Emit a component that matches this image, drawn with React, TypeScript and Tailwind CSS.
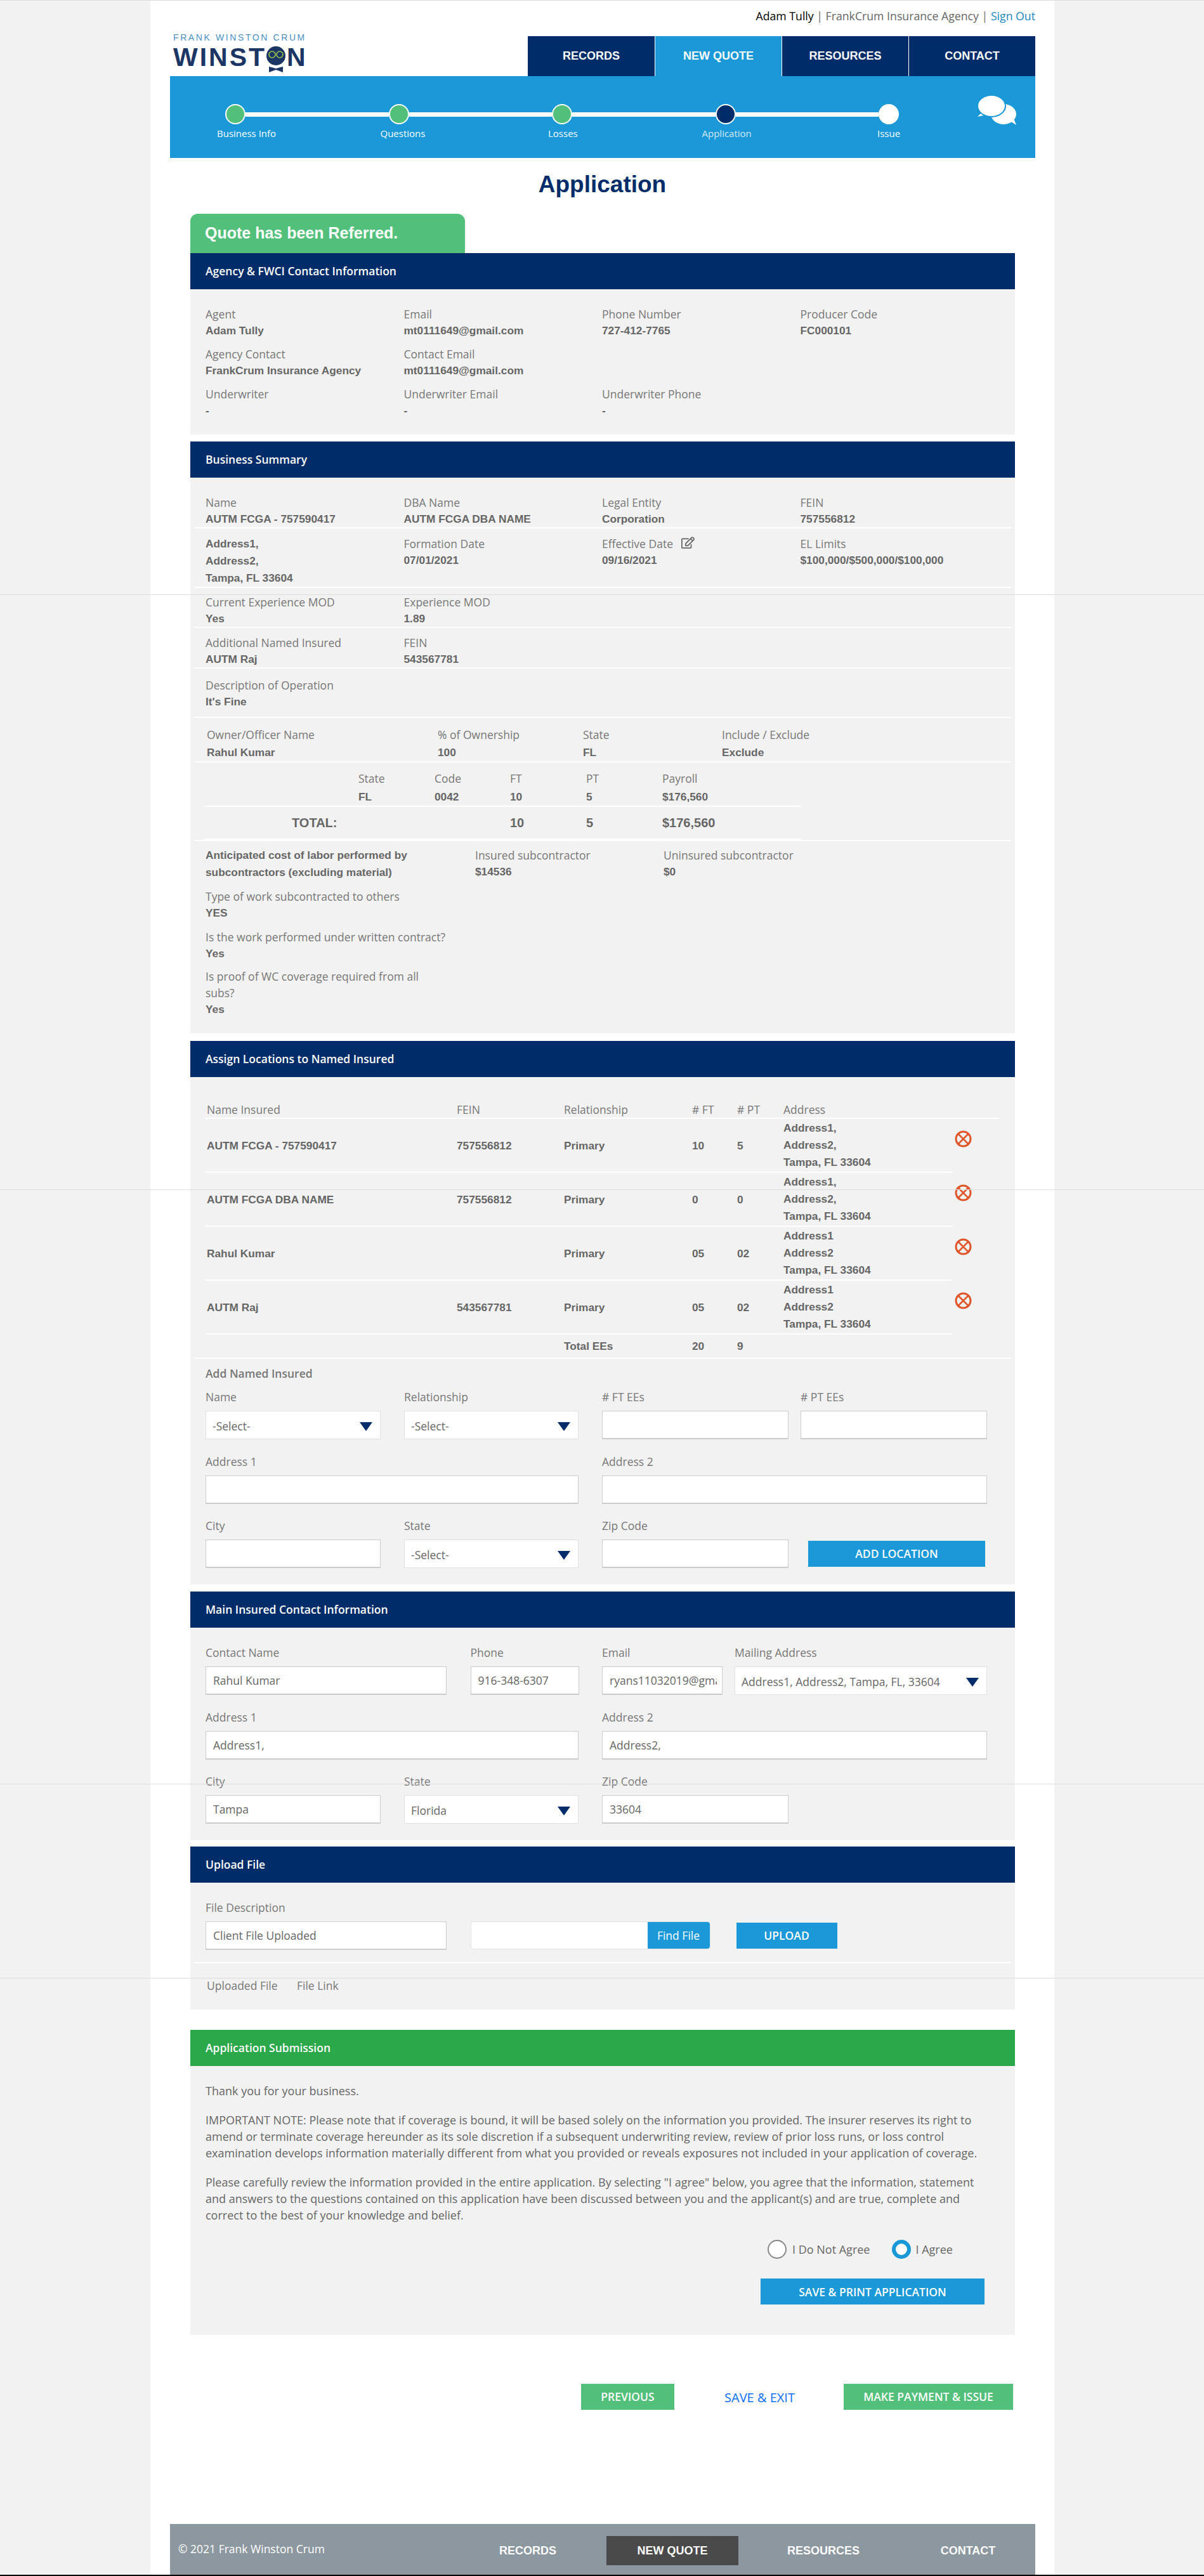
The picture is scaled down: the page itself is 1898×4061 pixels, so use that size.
import React from 'react';
import { FaRegEdit } from 'react-icons/fa';

const navItems = ['RECORDS', 'NEW QUOTE', 'RESOURCES', 'CONTACT'];

const sans = 'font-["Open_Sans",sans-serif]';
const arial = 'font-["Liberation_Sans",Arial,sans-serif]';

const Label = ({ children, className = '' }: { children?: React.ReactNode; className?: string }) => (
  <div className={`h-[26px] leading-[26px] text-[17.5px] text-[#777] whitespace-nowrap ${sans} ${className}`}>{children}</div>
);

const Value = ({ children, className = '' }: { children?: React.ReactNode; className?: string }) => (
  <div className={`h-[26px] leading-[26px] text-[17.3px] font-bold text-[#666] whitespace-nowrap ${arial} ${className}`}>{children}</div>
);

const Field = ({ label, value }: { label?: React.ReactNode; value?: React.ReactNode }) => (
  <div>
    <Label>{label}</Label>
    <Value>{value}</Value>
  </div>
);

const Section = ({ title, green, children }: { title: string; green?: boolean; children: React.ReactNode }) => (
  <section className="ml-[63px] w-[1300px]">
    <div className={`h-[57px] flex items-center pl-6 text-white text-[17.5px] font-semibold ${sans} ${green ? 'bg-[#2aa84a]' : 'bg-[#002d6a]'}`}>
      {title}
    </div>
    <div className="bg-[#f2f2f2]">{children}</div>
  </section>
);

// white divider between the summary rows
const Row = ({ children, className = '' }: { children: React.ReactNode; className?: string }) => (
  <div className={`mx-[6px] pl-[18px] border-b-2 border-white ${className}`}>{children}</div>
);

const Arrow = () => (
  <svg className="absolute right-[12px] top-[17px]" width="20" height="14" viewBox="0 0 20 14">
    <polygon points="0,0 20,0 10,14" fill="#002d6a" />
  </svg>
);

const Select = ({ value, className = '' }: { value: string; className?: string }) => (
  <div className={`relative h-[45px] bg-white border border-[#e2e2e2] pl-[10px] leading-[46px] text-[17.5px] text-[#666] whitespace-nowrap ${sans} ${className}`}>
    {value}
    <Arrow />
  </div>
);

const Input = ({ value = '', className = '' }: { value?: string; className?: string }) => (
  <input
    readOnly
    value={value}
    className={`block h-[45px] bg-white border border-[#ccc] border-b-2 pl-[11px] pr-[8px] text-[17.5px] text-[#666] ${sans} ${className}`}
  />
);

const BlueButton = ({ children, className = '' }: { children: React.ReactNode; className?: string }) => (
  <div className={`h-[41px] bg-[#1a98d8] flex items-center justify-center text-white text-[17.5px] font-semibold ${sans} ${className}`}>
    {children}
  </div>
);

const Step = ({ label, color, labelClass }: { label: string; color: string; labelClass: string }) => (
  <div className={`relative w-8 h-8 rounded-full border-2 border-white shrink-0 ${color}`}>
    <div className={`absolute top-[33px] h-[22px] leading-[22px] text-[15px] text-white whitespace-nowrap ${sans} ${labelClass}`}>{label}</div>
  </div>
);

const StepLine = () => <div className="h-[7px] flex-1 bg-white" />;

const Cancel = () => (
  <svg className="mt-[18px]" width="27" height="27" viewBox="0 0 27 27" fill="none" stroke="#e0562a" strokeWidth="3">
    <circle cx="13.5" cy="13.5" r="11.5" />
    <path d="M6 6 L21 21 M21 6 L6 21" strokeWidth="2.6" />
  </svg>
);

const tableCols = 'grid grid-cols-[394px_169px_202px_71px_73px_270px_27px]';

const locations = [
  { name: 'AUTM FCGA - 757590417', fein: '757556812', ft: '10', pt: '5', a1: 'Address1,', a2: 'Address2,' },
  { name: 'AUTM FCGA DBA NAME', fein: '757556812', ft: '0', pt: '0', a1: 'Address1,', a2: 'Address2,' },
  { name: 'Rahul Kumar', fein: '', ft: '05', pt: '02', a1: 'Address1', a2: 'Address2' },
  { name: 'AUTM Raj', fein: '543567781', ft: '05', pt: '02', a1: 'Address1', a2: 'Address2' },
];

const FormLabel = ({ children, className = '' }: { children: React.ReactNode; className?: string }) => (
  <Label className={`mb-[9px] font-medium ${className}`}>{children}</Label>
);

const App = () => {
  return (
    <div className="relative w-[1898px] h-[4061px] bg-[#f2f2f2] overflow-hidden border-t border-[#ddd]">
      <div className="ml-[237px] w-[1425px] h-full bg-white">
        {/* Top bar */}
        <div className="ml-[31px] w-[1364px]">
          <div className={`h-[56px] pt-[12px] text-right text-[17.7px] leading-[24px] text-[#666] ${sans}`}>
            <span className="text-black font-medium">Adam Tully</span> | FrankCrum Insurance Agency | <span className="text-[#1a88c4]">Sign Out</span>
          </div>

          <div className="flex justify-between h-[63px]">
            <div className={`-mt-[4px] ml-[5px] ${arial}`}>
              <div className="h-[13px] leading-[13px] text-[14px] tracking-[2.6px] text-[#4a90c4] whitespace-nowrap">FRANK WINSTON CRUM</div>
              <div className="flex items-start mt-[2px] text-[41px] leading-[44px] font-bold tracking-[3px] text-[#1b3565]">
                WINST
                <svg className="mt-[5px] -ml-[1px] mr-[1px]" width="32" height="41" viewBox="0 0 32 41">
                  <circle cx="16" cy="15" r="15" fill="#1b3565" />
                  <g fill="none" stroke="#9cc54a" strokeWidth="1.6">
                    <circle cx="10" cy="13" r="5" />
                    <circle cx="22" cy="13" r="5" />
                  </g>
                  <polygon points="5,32 16,35 27,32 27,41 16,37 5,41" fill="#1b3565" />
                </svg>
                N
              </div>
            </div>
            <div className="flex">
              {navItems.map((item, i) => (
                <div
                  key={item}
                  className={`w-[200px] flex items-center justify-center text-white text-[18px] font-bold ${arial} ${i > 0 ? 'border-l border-white' : ''} ${i === 1 ? 'bg-[#1a98d8]' : 'bg-[#002d6a]'}`}
                >
                  {item}
                </div>
              ))}
            </div>
          </div>

          {/* Progress band */}
          <div className="relative h-[129px] bg-[#1a98d8] pt-[44px] pl-[87px]">
            <div className="w-[1062px] flex items-center">
              <Step label="Business Info" color="bg-[#52c07a]" labelClass="-left-[15px]" />
              <StepLine />
              <Step label="Questions" color="bg-[#52c07a]" labelClass="-left-[15px]" />
              <StepLine />
              <Step label="Losses" color="bg-[#52c07a]" labelClass="-left-[8px]" />
              <StepLine />
              <Step label="Application" color="bg-[#002d6a]" labelClass="-left-[23px] opacity-80" />
              <StepLine />
              <Step label="Issue" color="bg-white" labelClass="-left-[4px]" />
            </div>
            <svg className="absolute left-[1273px] top-[30px]" width="62" height="48" viewBox="0 0 62 48">
              <ellipse cx="41" cy="30" rx="20" ry="16" fill="white" />
              <polygon points="50,40 61,47 56,34" fill="white" />
              <polygon points="8,26 0,34 14,31" fill="white" />
              <ellipse cx="22" cy="17" rx="22" ry="17" fill="white" stroke="#1a98d8" strokeWidth="2" />
            </svg>
          </div>
        </div>

        <h1 className={`h-[88px] pt-[20px] text-center text-[37px] leading-[44px] font-bold text-[#002d6a] ${arial}`}>Application</h1>

        <div className={`ml-[63px] w-[433px] h-[62px] bg-[#52c07a] rounded-t-[12px] pl-[23px] flex items-center text-white text-[25px] font-bold ${arial}`}>
          Quote has been Referred.
        </div>

        <Section title="Agency & FWCI Contact Information">
          <div className="pt-[26px] pb-[25px] pl-6">
            <div className="grid grid-cols-[312.5px_312.5px_312.5px_312.5px] gap-y-[11px]">
              <Field label="Agent" value="Adam Tully" />
              <Field label="Email" value="mt0111649@gmail.com" />
              <Field label="Phone Number" value="727-412-7765" />
              <Field label="Producer Code" value="FC000101" />
              <Field label="Agency Contact" value="FrankCrum Insurance Agency" />
              <Field label="Contact Email" value="mt0111649@gmail.com" />
              <div />
              <div />
              <Field label="Underwriter" value="-" />
              <Field label="Underwriter Email" value="-" />
              <Field label="Underwriter Phone" value="-" />
            </div>
          </div>
        </Section>

        <div className="h-[11px]" />

        <Section title="Business Summary">
          <Row className="pt-[26px]">
            <div className="grid grid-cols-[312.5px_312.5px_312.5px_312.5px]">
              <Field label="Name" value="AUTM FCGA - 757590417" />
              <Field label="DBA Name" value="AUTM FCGA DBA NAME" />
              <Field label="Legal Entity" value="Corporation" />
              <Field label="FEIN" value="757556812" />
            </div>
          </Row>
          <Row className="pt-[11px]">
            <div className="grid grid-cols-[312.5px_312.5px_312.5px_312.5px] h-[81px]">
              <div>
                <Value className="h-[27px] leading-[27px]">Address1,</Value>
                <Value className="h-[27px] leading-[27px]">Address2,</Value>
                <Value className="h-[27px] leading-[27px]">Tampa, FL 33604</Value>
              </div>
              <Field label="Formation Date" value="07/01/2021" />
              <Field
                label={
                  <span className="flex items-center gap-[13px]">
                    Effective Date <FaRegEdit className="text-[#666] text-[21px] -mt-[4px]" />
                  </span>
                }
                value="09/16/2021"
              />
              <Field label="EL Limits" value="$100,000/$500,000/$100,000" />
            </div>
          </Row>
          <Row className="pt-[9px]">
            <div className="grid grid-cols-[312.5px_312.5px_312.5px_312.5px]">
              <Field label="Current Experience MOD" value="Yes" />
              <Field label="Experience MOD" value="1.89" />
            </div>
          </Row>
          <Row className="pt-[10px]">
            <div className="grid grid-cols-[312.5px_312.5px_312.5px_312.5px]">
              <Field label="Additional Named Insured" value="AUTM Raj" />
              <Field label="FEIN" value="543567781" />
            </div>
          </Row>
          <Row className="pt-[13px] pb-[11px]">
            <Field label="Description of Operation" value="It's Fine" />
          </Row>
          <Row className="pt-[13px] pb-[1px]">
            <div className="grid grid-cols-[364px_229px_219px_300px] pl-[2px]">
              <div>
                <Label className="mb-[2px]">Owner/Officer Name</Label>
                <Value>Rahul Kumar</Value>
              </div>
              <div>
                <Label className="mb-[2px]">% of Ownership</Label>
                <Value>100</Value>
              </div>
              <div>
                <Label className="mb-[2px]">State</Label>
                <Value>FL</Value>
              </div>
              <div>
                <Label className="mb-[2px]">Include / Exclude</Label>
                <Value>Exclude</Value>
              </div>
            </div>
          </Row>

          <div className="mx-[6px] border-b-2 border-white">
            <div className="ml-[16px] w-[941px] pt-[12px] border-b-2 border-white">
              <div className="grid grid-cols-[243px_120px_119px_120px_120px_219px]">
                <div />
                <div><Label className="mb-[3px]">State</Label><Value>FL</Value></div>
                <div><Label className="mb-[3px]">Code</Label><Value>0042</Value></div>
                <div><Label className="mb-[3px]">FT</Label><Value>10</Value></div>
                <div><Label className="mb-[3px]">PT</Label><Value>5</Value></div>
                <div className="pb-[1px]"><Label className="mb-[3px]">Payroll</Label><Value>$176,560</Value></div>
              </div>
            </div>
            <div className="ml-[16px] w-[941px] h-[52px] border-b-2 border-white grid grid-cols-[482px_120px_120px_219px] items-center">
              <Value className="pl-[138px] text-[20px]">TOTAL:</Value>
              <Value className="text-[20px]">10</Value>
              <Value className="text-[20px]">5</Value>
              <Value className="text-[20px]">$176,560</Value>
            </div>
          </div>

          <div className="pl-6 pt-[9px] pb-[25px]">
            <div className="grid grid-cols-[425px_297px_300px]">
              <div className={`text-[17.3px] font-bold text-[#666] leading-[27px] ${arial}`}>
                Anticipated cost of labor performed by<br />subcontractors (excluding material)
              </div>
              <Field label="Insured subcontractor" value="$14536" />
              <Field label="Uninsured subcontractor" value="$0" />
            </div>
            <div className="mt-[11px]">
              <Field label="Type of work subcontracted to others" value="YES" />
            </div>
            <div className="mt-[12px]">
              <Field label="Is the work performed under written contract?" value="Yes" />
            </div>
            <div className="mt-[10px]">
              <Label>Is proof of WC coverage required from all</Label>
              <Field label="subs?" value="Yes" />
            </div>
          </div>
        </Section>

        <div className="h-[12px]" />

        <Section title="Assign Locations to Named Insured">
          <div className="ml-[24px] pt-[38px]">
            <div className="w-[1251px] pl-[2px] border-b-2 border-white">
              <div className={`${tableCols}`}>
                <Label>Name Insured</Label>
                <Label>FEIN</Label>
                <Label>Relationship</Label>
                <Label># FT</Label>
                <Label># PT</Label>
                <Label>Address</Label>
              </div>
            </div>
            {locations.map((loc) => (
              <div key={loc.name} className="relative w-[1178px] pl-[2px] h-[85px] border-b-2 border-white">
                <div className={`${tableCols} h-[83px] items-center`}>
                  <Value>{loc.name}</Value>
                  <Value>{loc.fein}</Value>
                  <Value>Primary</Value>
                  <Value>{loc.ft}</Value>
                  <Value>{loc.pt}</Value>
                  <div>
                    <Value className="h-[27px] leading-[27px]">{loc.a1}</Value>
                    <Value className="h-[27px] leading-[27px]">{loc.a2}</Value>
                    <Value className="h-[27px] leading-[27px]">Tampa, FL 33604</Value>
                  </div>
                  <div className="self-start h-0">
                    <Cancel />
                  </div>
                </div>
              </div>
            ))}
            <div className={`pl-[2px] h-[36px] ${tableCols} items-center`}>
              <div />
              <div />
              <Value>Total EEs</Value>
              <Value>20</Value>
              <Value>9</Value>
            </div>
          </div>
          <div className="mx-[6px] border-b-2 border-white" />
          <div className="pl-6 pt-[10px] pb-[26px]">
            <Label className="font-semibold">Add Named Insured</Label>
            <div className="mt-[11px] grid grid-cols-[313px_312px_313px_294px]">
              <div><FormLabel>Name</FormLabel><Select value="-Select-" className="w-[276px]" /></div>
              <div><FormLabel>Relationship</FormLabel><Select value="-Select-" className="w-[275px]" /></div>
              <div><FormLabel># FT EEs</FormLabel><Input className="w-[294px]" /></div>
              <div><FormLabel># PT EEs</FormLabel><Input className="w-[294px]" /></div>
            </div>
            <div className="mt-[22px] grid grid-cols-[625px_607px]">
              <div><FormLabel>Address 1</FormLabel><Input className="w-[588px]" /></div>
              <div><FormLabel>Address 2</FormLabel><Input className="w-[607px]" /></div>
            </div>
            <div className="mt-[21px] grid grid-cols-[313px_312px_325px_279px]">
              <div><FormLabel>City</FormLabel><Input className="w-[276px]" /></div>
              <div><FormLabel>State</FormLabel><Select value="-Select-" className="w-[275px]" /></div>
              <div><FormLabel>Zip Code</FormLabel><Input className="w-[294px]" /></div>
              <div className="pt-[37px]"><BlueButton className="w-[279px]">ADD LOCATION</BlueButton></div>
            </div>
          </div>
        </Section>

        <div className="h-[11px]" />

        <Section title="Main Insured Contact Information">
          <div className="pl-6 pt-[26px] pb-[26px]">
            <div className="flex">
              <div className="w-[417.5px]"><FormLabel>Contact Name</FormLabel><Input value="Rahul Kumar" className="w-[380px]" /></div>
              <div className="w-[207.5px]"><FormLabel>Phone</FormLabel><Input value="916-348-6307" className="w-[171px]" /></div>
              <div className="w-[209px]"><FormLabel>Email</FormLabel><Input value="ryans11032019@gmail.com" className="w-[190px]" /></div>
              <div><FormLabel>Mailing Address</FormLabel><Select value="Address1, Address2, Tampa, FL, 33604" className="w-[398px]" /></div>
            </div>
            <div className="mt-[22px] grid grid-cols-[625px_607px]">
              <div><FormLabel>Address 1</FormLabel><Input value="Address1," className="w-[588px]" /></div>
              <div><FormLabel>Address 2</FormLabel><Input value="Address2," className="w-[607px]" /></div>
            </div>
            <div className="mt-[21px] grid grid-cols-[313px_312px_325px]">
              <div><FormLabel>City</FormLabel><Input value="Tampa" className="w-[276px]" /></div>
              <div><FormLabel>State</FormLabel><Select value="Florida" className="w-[275px]" /></div>
              <div><FormLabel>Zip Code</FormLabel><Input value="33604" className="w-[294px]" /></div>
            </div>
          </div>
        </Section>

        <div className="h-[10px]" />

        <Section title="Upload File">
          <div className="pl-6 pt-[26px]">
            <FormLabel>File Description</FormLabel>
            <div className="flex items-start">
              <Input value="Client File Uploaded" className="w-[380px]" />
              <div className="ml-[37.5px] w-[378px] h-[44px] bg-white rounded-[4px] border border-[#e2e2e2] flex justify-end">
                <div className={`w-[98px] bg-[#1a98d8] rounded-r-[4px] flex items-center justify-center text-white text-[17.5px] font-medium ${sans}`}>Find File</div>
              </div>
              <BlueButton className="ml-[41px] w-[159px] mt-[2px]">UPLOAD</BlueButton>
            </div>
          </div>
          <div className="mx-[6px] mt-[19px] border-b-2 border-white" />
          <div className="pl-[26px] pt-[22px] pb-[25px] flex">
            <Label className="font-medium w-[142px]">Uploaded File</Label>
            <Label className="font-medium">File Link</Label>
          </div>
        </Section>

        <div className="h-[32px]" />

        <Section title="Application Submission" green>
          <div className={`pl-6 pt-[26px] pb-[48px] text-[18px] leading-[26px] text-[#666] ${sans}`}>
            <p>Thank you for your business.</p>
            <p className="mt-[20px] w-[1240px]">
              IMPORTANT NOTE: Please note that if coverage is bound, it will be based solely on the information you provided. The insurer reserves its right to amend or terminate coverage hereunder as its sole discretion if a subsequent underwriting review, review of prior loss runs, or loss control examination develops information materially different from what you provided or reveals exposures not included in your application of coverage.
            </p>
            <p className="mt-[20px] w-[1240px]">
              Please carefully review the information provided in the entire application. By selecting "I agree" below, you agree that the information, statement and answers to the questions contained on this application have been discussed between you and the applicant(s) and are true, complete and correct to the best of your knowledge and belief.
            </p>
            <div className="mt-[26px] ml-[886px] h-[30px] flex items-center font-medium">
              <div className="w-[30px] h-[30px] rounded-full bg-white border-2 border-[#888]" />
              <span className="ml-[9px] w-[156.5px]">I Do Not Agree</span>
              <div className="w-[30px] h-[30px] rounded-full bg-white border-[6px] border-[#1a98d8]" />
              <span className="ml-[8px]">I Agree</span>
            </div>
            <BlueButton className="mt-[31px] ml-[875px] w-[353px]">SAVE &amp; PRINT APPLICATION</BlueButton>
          </div>
        </Section>

        {/* Page actions */}
        <div className={`mt-[77px] ml-[679px] h-[41px] flex items-center text-[17.5px] font-semibold ${sans}`}>
          <div className="w-[147px] h-full bg-[#52c07a] text-white flex items-center justify-center">PREVIOUS</div>
          <div className="ml-[78px] w-[113px] text-center text-[#0d6efd] text-[20px] font-medium pt-[2px] whitespace-nowrap">SAVE &amp; EXIT</div>
          <div className="ml-[76px] w-[267px] h-full bg-[#52c07a] text-white flex items-center justify-center">MAKE PAYMENT &amp; ISSUE</div>
        </div>

        {/* Footer */}
        <footer className="mt-[180px] ml-[31px] w-[1364px] h-[81px] bg-[#8d979f] flex items-start text-white">
          <div className={`w-[462px] pl-[13px] pt-[26px] text-[17.5px] leading-[26px] font-medium ${sans}`}>© 2021 Frank Winston Crum</div>
          <div className={`flex mt-[19px] h-[46px] text-[18px] font-bold ${arial}`}>
            <div className="w-[204px] flex items-center justify-center">RECORDS</div>
            <div className="ml-[22px] w-[208px] bg-[#4a4a4a] flex items-center justify-center">NEW QUOTE</div>
            <div className="w-[268px] flex items-center justify-center">RESOURCES</div>
            <div className="w-[188px] flex items-center justify-center">CONTACT</div>
          </div>
        </footer>
      </div>

      {/* capture seams in the full-page screenshot */}
      <div className="absolute left-0 right-0 top-[936px] h-px bg-[#ddd]" />
      <div className="absolute left-0 right-0 top-[1874px] h-px bg-[#ddd]" />
      <div className="absolute left-0 right-0 top-[2811px] h-px bg-[#ddd]" />
      <div className="absolute left-0 right-0 top-[3117px] h-px bg-[#ddd]" />
      <div className="absolute left-0 right-0 bottom-0 h-[2px] bg-black" />
    </div>
  );
};

export default App;
